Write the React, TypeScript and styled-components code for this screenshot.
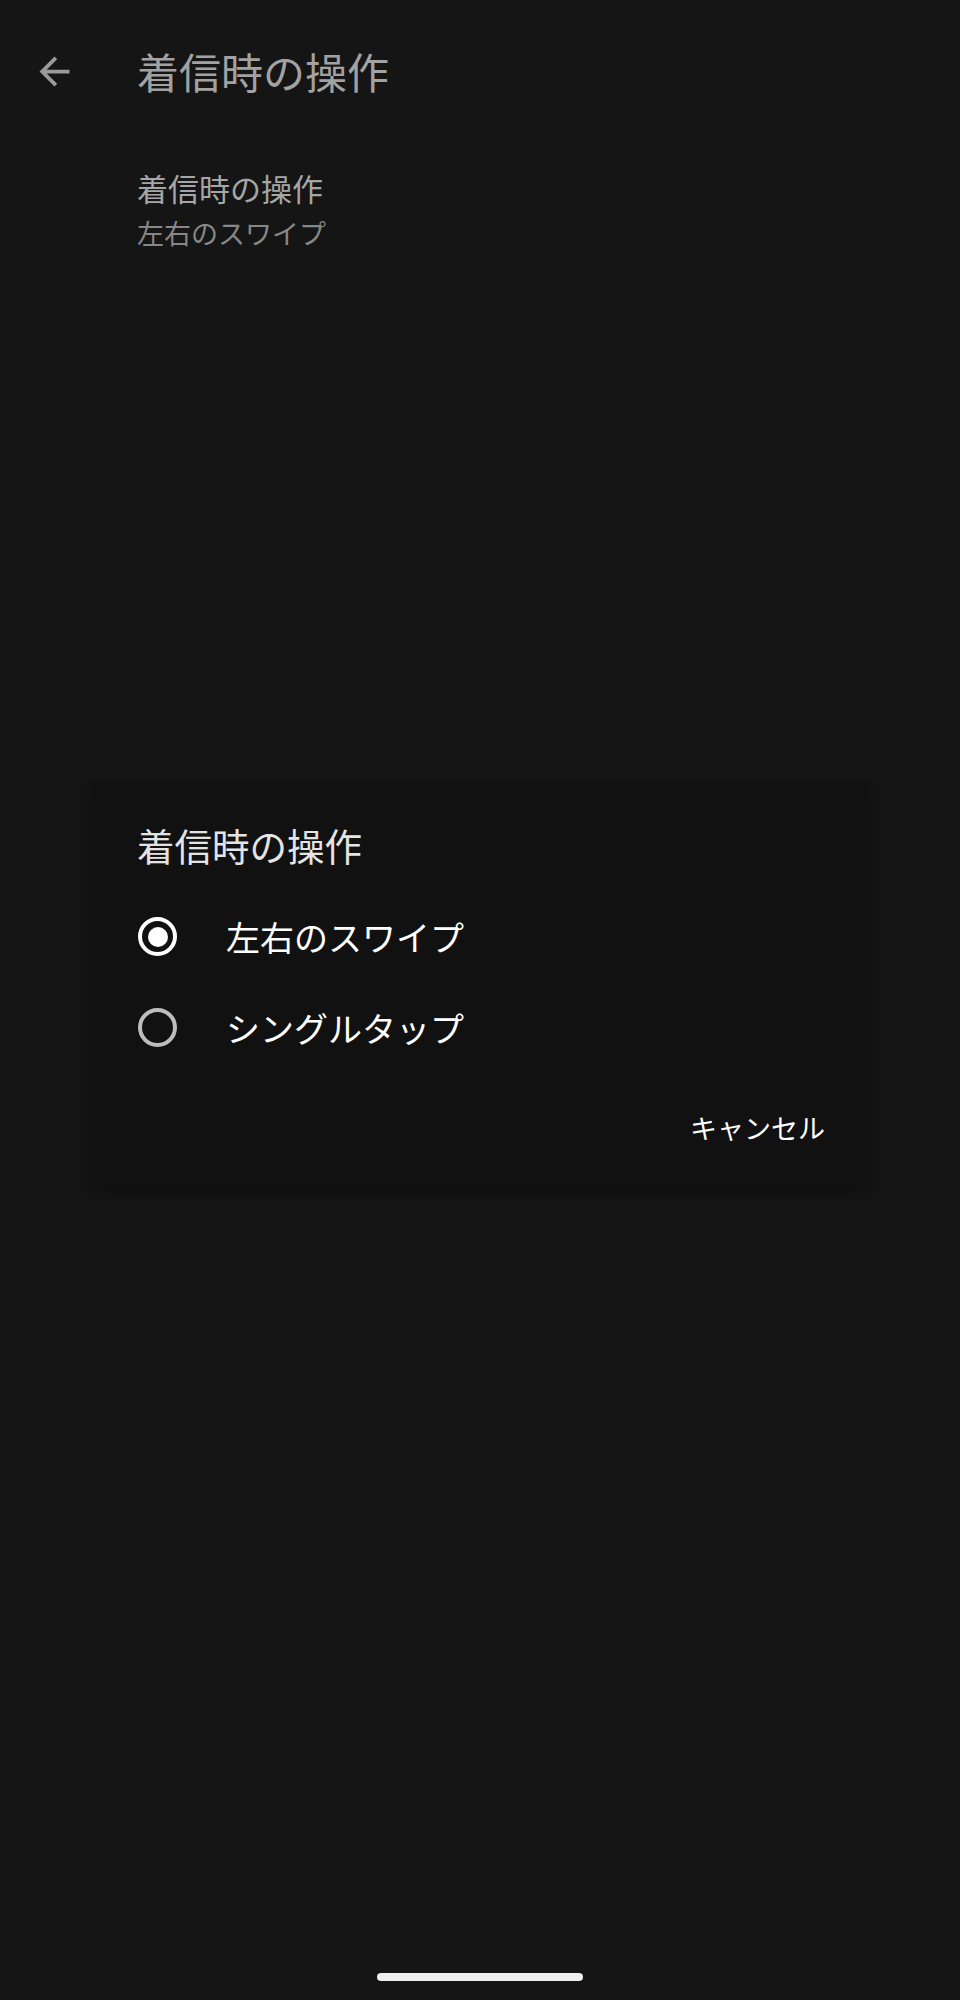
import React, { useState } from "react";
import styled, { createGlobalStyle } from "styled-components";

const GlobalStyle = createGlobalStyle`
  html, body {
    margin: 0;
    padding: 0;
    background: #151515;
  }
  body {
    font-family: "Noto Sans CJK JP", "Noto Sans", sans-serif;
    -webkit-font-smoothing: antialiased;
  }
  * { box-sizing: border-box; }
`;

const Screen = styled.div`
  position: relative;
  width: 960px;
  height: 2000px;
  background: #151515;
  overflow: hidden;
`;

const Header = styled.header`
  display: flex;
  align-items: center;
  height: 142px;
`;

const BackButton = styled.button`
  display: flex;
  align-items: center;
  justify-content: center;
  width: 108px;
  height: 100%;
  margin-right: 29px;
  padding: 0;
  border: none;
  background: transparent;
  color: #9a9a9a;
`;

const HeaderTitle = styled.h1`
  margin: 0;
  font-size: 42px;
  line-height: 56px;
  font-weight: 400;
  color: #a2a2a2;
`;

const PrefItem = styled.div`
  display: flex;
  flex-direction: column;
  margin-top: 26px;
  padding-left: 137px;
`;

const PrefTitle = styled.div`
  font-size: 31px;
  line-height: 40px;
  color: #a6a6a6;
`;

const PrefSummary = styled.div`
  margin-top: 7px;
  font-size: 27px;
  line-height: 36px;
  color: #878787;
`;

const Overlay = styled.div`
  position: absolute;
  left: 0;
  top: 0;
  width: 960px;
  height: 1966px;
  display: flex;
  align-items: center;
  justify-content: center;
`;

const Dialog = styled.div`
  width: 780px;
  height: 404px;
  background: #111111;
  box-shadow: 0 6px 18px rgba(0, 0, 0, 0.35);
  display: flex;
  flex-direction: column;
  padding-top: 40px;
`;

const DialogTitle = styled.h2`
  margin: 0;
  padding-left: 47px;
  font-size: 37.5px;
  line-height: 48px;
  font-weight: 400;
  color: #e4e4e4;
`;

const OptionList = styled.div`
  display: flex;
  flex-direction: column;
  margin-top: 22px;
`;

const OptionRow = styled.label`
  display: flex;
  align-items: center;
  height: 91px;
  padding-left: 48px;
  cursor: pointer;
`;

const Radio = styled.span<{ $checked: boolean }>`
  display: flex;
  align-items: center;
  justify-content: center;
  width: 39px;
  height: 39px;
  border-radius: 50%;
  border: 4px solid ${(p) => (p.$checked ? "#ffffff" : "#bdbdbd")};
  flex-shrink: 0;
`;

const RadioDot = styled.span`
  width: 20px;
  height: 20px;
  border-radius: 50%;
  background: #ffffff;
`;

const OptionText = styled.span`
  margin-left: 49px;
  font-size: 34px;
  line-height: 48px;
  color: #ffffff;
`;

const Actions = styled.div`
  display: flex;
  justify-content: flex-end;
  align-items: center;
  height: 64px;
  margin-top: 23px;
  padding-right: 45px;
`;

const TextButton = styled.button`
  border: none;
  background: transparent;
  padding: 0;
  font-family: inherit;
  font-size: 27px;
  line-height: 40px;
  color: #ffffff;
`;

const HomeIndicator = styled.div`
  position: absolute;
  left: 377px;
  top: 1973px;
  width: 206px;
  height: 8px;
  border-radius: 4px;
  background: #efefef;
`;

const ArrowBack = () => (
  <svg width="45" height="45" viewBox="0 0 24 24" fill="currentColor">
    <path d="M20 11H7.83l5.59-5.59L12 4l-8 8 8 8 1.41-1.41L7.83 13H20v-2z" />
  </svg>
);

const options = ["左右のスワイプ", "シングルタップ"];

export default function App() {
  const [selected, setSelected] = useState(0);
  return (
    <>
      <GlobalStyle />
      <Screen>
        <Header>
          <BackButton aria-label="戻る">
            <ArrowBack />
          </BackButton>
          <HeaderTitle>着信時の操作</HeaderTitle>
        </Header>
        <PrefItem>
          <PrefTitle>着信時の操作</PrefTitle>
          <PrefSummary>{options[selected]}</PrefSummary>
        </PrefItem>
        <Overlay>
          <Dialog>
            <DialogTitle>着信時の操作</DialogTitle>
            <OptionList>
              {options.map((o, i) => (
                <OptionRow key={o} onClick={() => setSelected(i)}>
                  <Radio $checked={selected === i}>
                    {selected === i && <RadioDot />}
                  </Radio>
                  <OptionText>{o}</OptionText>
                </OptionRow>
              ))}
            </OptionList>
            <Actions>
              <TextButton>キャンセル</TextButton>
            </Actions>
          </Dialog>
        </Overlay>
        <HomeIndicator />
      </Screen>
    </>
  );
}
